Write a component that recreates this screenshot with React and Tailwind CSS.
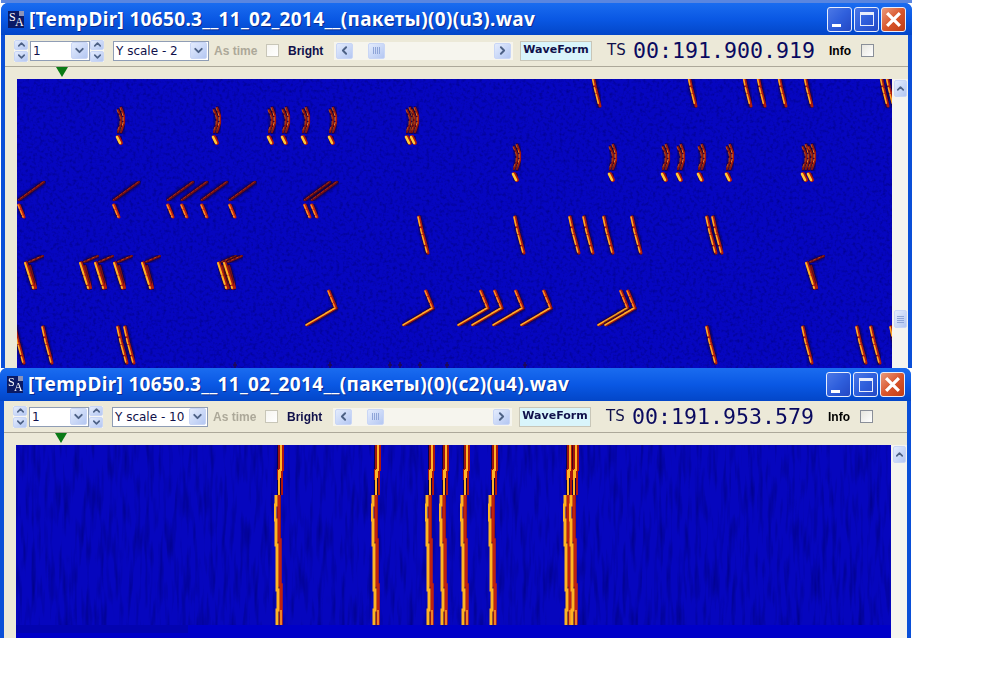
import { ChevronDown, ChevronLeft, ChevronRight, ChevronUp } from 'lucide-react';

const XpArrow = ({ icon: Icon, size = 11 }) => <Icon size={size} strokeWidth={3.5} className="text-[#4d6185]" />;

const xpButton = 'flex items-center justify-center rounded-[2px] border border-[#c9d6f6] bg-gradient-to-br from-[#e4ecfd] to-[#b4c7f2]';

const Spinner = () => (
  <div className="flex h-[22px] w-[14px] shrink-0 flex-col gap-[1px] bg-[#f6f6f2]">
    <div className={`${xpButton} h-[10.5px]`}><XpArrow icon={ChevronUp} /></div>
    <div className={`${xpButton} h-[10.5px]`}><XpArrow icon={ChevronDown} /></div>
  </div>
);

const Combo = ({ value, className }) => (
  <div className={`flex h-[20px] shrink-0 items-center justify-between border border-[#8f9db5] bg-white pl-[2px] pr-[1px] font-['DejaVu_Sans',sans-serif] text-[12px] font-normal leading-none text-[#10104a] ${className}`}>
    <span className="whitespace-nowrap">{value}</span>
    <div className={`${xpButton} h-[17px] w-[17px]`}><XpArrow icon={ChevronDown} size={13} /></div>
  </div>
);

const CheckBox = ({ className }) => (
  <div className={`h-[13px] w-[13px] shrink-0 border border-[#8a8f98] bg-gradient-to-br from-[#e6e5de] to-white ${className}`} />
);

const CaptionButton = ({ children, close }) => (
  <div className={`flex h-[25px] w-[25px] items-center justify-center rounded-[3px] border border-[#e8eefc] ${close ? 'bg-gradient-to-br from-[#e99a7c] via-[#d9562c] to-[#c03c12]' : 'bg-gradient-to-br from-[#4c78e6] via-[#2f5fdc] to-[#2448c4]'}`}>
    {children}
  </div>
);

const Logo = () => (
  <div className="relative h-[17px] w-[16px] shrink-0 overflow-hidden bg-[#0a1a66] font-['Liberation_Serif',serif] text-[12px] leading-none text-white">
    <span className="absolute left-[1px] top-[0px]">S</span>
    <span className="absolute left-[7px] top-[5px]">A</span>
    <span className="absolute right-0 top-0 h-[5px] w-[5px] bg-[#8d94b8]" />
  </div>
);

const noise = (id, fx, fy, seed, strength) => (
  <filter id={id} x="0" y="0" width="100%" height="100%">
    <feTurbulence type="fractalNoise" baseFrequency={`${fx} ${fy}`} numOctaves="2" seed={seed} />
    <feColorMatrix type="matrix" values={`0 0 0 0 0  0 0 0 0 0  0 0 0 0 0.2  ${strength} 0 0 0 ${-strength * 0.45}`} />
  </filter>
);

const SoftDefs = () => (
  <>
    <filter id="soft" x="-5%" y="-5%" width="110%" height="110%"><feGaussianBlur stdDeviation="0.45" /></filter>
    <filter id="halo" x="-5%" y="-5%" width="110%" height="110%"><feGaussianBlur stdDeviation="1.2" /></filter>
  </>
);

// one burst of the spectrogram: dark halo, red body, hot core
const Stroke = ({ d, core = '#ffb020', body = '#b01a10', w = 2, dash }) => (
  <g fill="none" strokeLinecap="round" strokeLinejoin="round">
    <path d={d} stroke="#14001c" strokeWidth={w + 3.5} opacity="0.75" transform="translate(1 0)" filter="url(#halo)" />
    <path d={d} stroke={body} strokeWidth={w + 1} transform="translate(1 0)" />
    <path d={d} stroke={core} strokeWidth={w - 0.4} strokeDasharray={dash} />
  </g>
);

const Zig = ({ x, y = 108 }) => (
  <g transform={`translate(${x} ${y})`}>
    <Stroke d="M0 0 L3 8 L3 15 L0 24" core="#ffa030" body="#a01810" w={1.2} dash="3 2" />
    <Stroke d="M-3 2 L0 9 L0 16 L-3 24" core="#f07a24" body="#8a1410" w={1} dash="3 3" />
    <Stroke d="M-3 29 L0 35" core="#ffc838" w={3} />
  </g>
);

const Hook = ({ x }) => (
  <g transform={`translate(${x} 180)`}>
    <Stroke d="M25 2 L0 20" core="#b82c18" body="#6a0e14" w={1.2} dash="3 2" />
    <Stroke d="M0 25 L5 37" core="#ff8a24" body="#c02010" w={2} dash="4 2" />
  </g>
);

const Flag = ({ x, y = 256 }) => (
  <g transform={`translate(${x} ${y})`}>
    <Stroke d="M3 6 L17 0" core="#e85a1c" body="#701014" w={1} dash="2 3" />
    <Stroke d="M4 10 L10 32" core="#f07020" w={1.2} />
    <Stroke d="M0 7 L8 32" core="#ffb428" w={2.4} dash="12 2 8 3" />
  </g>
);

const Slash = ({ x, y = 327, h = 36, dx = 9 }) => (
  <g transform={`translate(${x} ${y})`}>
    <Stroke d={`M0 0 L${dx * 0.35} ${h * 0.4} L${dx} ${h}`} core="#ffa828" w={2} dash="9 3 5 2" />
  </g>
);

const Long = ({ x }) => (
  <g transform={`translate(${x} 291)`}>
    <Stroke d="M0 0 L7 17" core="#ff8a24" w={2} dash="5 2" />
    <Stroke d="M7 17 L-22 34" core="#ffb02c" body="#a01810" w={2} dash="3 1" />
  </g>
);

const TopSpectrum = () => (
  <svg viewBox="17 79 875 289" width="875" height="289" className="block">
    <defs>
      {noise('topNoise', 0.3, 0.3, 3, 1.4)}
      <SoftDefs />
    </defs>
    <rect x="17" y="79" width="875" height="289" fill="#0606c0" />
    <rect x="17" y="79" width="875" height="289" filter="url(#topNoise)" />
    <g filter="url(#soft)">
      {[592, 688, 743, 757, 778, 804, 880, 886].map((x) => <Slash key={x} x={x} y={76} h={30} dx={7} />)}
      {[120, 216, 271, 285, 305, 332, 409, 414].map((x) => <Zig key={x} x={x} />)}
      {[516, 612, 665, 680, 701, 729, 805, 811].map((x) => <Zig key={x} x={x} y={145} />)}
      {[18, 113, 167, 181, 201, 229, 304, 311].map((x) => <Hook key={x} x={x} />)}
      {[418, 514, 569, 583, 603, 631, 706, 712].map((x) => <Slash key={x} x={x} y={217} />)}
      {[25, 80, 95, 114, 142, 218, 224, 806].map((x) => <Flag key={x} x={x} />)}
      {[328, 425, 480, 494, 515, 543, 620, 627].map((x) => <Long key={x} x={x} />)}
      {[14, 42, 117, 124, 706, 802, 856, 870, 890].map((x) => <Slash key={x} x={x} />)}
    </g>
    {[235, 330, 390, 400, 420, 447, 525].map((x) => (
      <path key={x} d={`M${x} 362 V368 M${x - 2} 365 H${x + 2}`} stroke="#200a50" strokeWidth="1.5" />
    ))}
  </svg>
);

const lines = [276, 373, 427, 441, 462, 490, 565, 571];

const BottomSpectrum = () => (
  <svg viewBox="16 445 875 193" width="875" height="193" className="block">
    <defs>
      {noise('bottomNoise', 0.22, 0.025, 8, 1.6)}
      <SoftDefs />
    </defs>
    <rect x="16" y="445" width="875" height="193" fill="#0606be" />
    <rect x="16" y="445" width="875" height="180" filter="url(#bottomNoise)" />
    <rect x="16" y="625" width="875" height="13" fill="#0000c8" />
    <rect x="16" y="625" width="172" height="8" fill="#0505a0" opacity="0.6" />
    {lines.map((x) => (
      <g key={x} fill="none" filter="url(#soft)">
        <path d={`M${x + 4} 445 V495 M${x + 2} 495 V625`} stroke="#12001a" strokeWidth="9" opacity="0.75" filter="url(#halo)" />
        <path d={`M${x + 7} 445 V470 h-1 V495`} stroke="#b01810" strokeWidth="2" />
        <path d={`M${x + 3} 445 V470 h-1 V480`} stroke="#a01810" strokeWidth="2" />
        <path d={`M${x + 3} 495 V540 h1 V585 h1 V625`} stroke="#c02010" strokeWidth="3.5" />
        <path d={`M${x + 5} 445 V470 h-1 V478 M${x + 3} 470 V495`} stroke="#ffb428" strokeWidth="2" />
        <path d={`M${x} 495 V505 h-1 V520 h1 V545 h1 V590 h1 V610 h-1 V625`} stroke="#ffb420" strokeWidth="3" />
        <path d={`M${x + 5} 610 V625`} stroke="#f08020" strokeWidth="2" />
      </g>
    ))}
  </svg>
);

const AppWindow = ({ title, scale, ts, titleHeight, bodyHeight, className, children, thumb }) => (
  <div className={`flex w-[911px] flex-col overflow-hidden rounded-t-[7px] bg-[#0a4fd8] ${className}`}>
    <div
      className="flex shrink-0 items-center justify-between bg-gradient-to-b from-[#1a6cf0] via-[#0a58e4] to-[#0346c8] pl-[7px] pr-[6px]"
      style={{ height: titleHeight }}
    >
      <div className="flex items-center gap-[5px]">
        <Logo />
        <span className="whitespace-nowrap font-['Noto_Sans',sans-serif] text-[19px] font-bold leading-none tracking-[0.33px] text-white [text-shadow:1px_1px_0_#0a2a90]">{title}</span>
      </div>
      <div className="flex gap-[2px]">
        <CaptionButton>
          <span className="mt-[13px] mr-[6px] h-[3px] w-[9px] bg-white" />
        </CaptionButton>
        <CaptionButton>
          <span className="h-[14px] w-[14px] border border-t-[3px] border-[#e8eefc]" />
        </CaptionButton>
        <CaptionButton close>
          <svg viewBox="0 0 16 16" width="17" height="17"><path d="M2 2 L14 14 M14 2 L2 14" stroke="#fff" strokeWidth="3" /></svg>
        </CaptionButton>
      </div>
    </div>

    <div className="mx-[4px] flex h-[32px] shrink-0 items-center border-b border-[#aca899] bg-[#ece9d8] pl-[9px] font-['Liberation_Sans',sans-serif] text-[12px] font-bold">
      <Spinner />
      <Combo value="1" className="ml-[2px] w-[60px]" />
      <Spinner />
      <Combo value={scale} className="ml-[9px] w-[96px]" />
      <span className="ml-[5px] w-[52px] whitespace-nowrap text-[#aca899]">As time</span>
      <CheckBox className="border-[#c8c6b8] from-[#f6f5f0] to-white" />
      <span className="ml-[9px] w-[46px] text-[#10104a]">Bright</span>
      <div className="flex h-[18px] w-[179px] shrink-0 items-center justify-between bg-[#f6f5ee] px-[2px]">
        <div className="flex items-center gap-[15px]">
          <div className={`${xpButton} h-[16px] w-[17px]`}><XpArrow icon={ChevronLeft} size={13} /></div>
          <div className={`${xpButton} h-[16px] w-[17px] gap-[1px]`}>
            <span className="h-[7px] w-px bg-[#8fa5d8]" />
            <span className="h-[7px] w-px bg-[#8fa5d8]" />
            <span className="h-[7px] w-px bg-[#8fa5d8]" />
            <span className="h-[7px] w-px bg-[#8fa5d8]" />
          </div>
        </div>
        <div className={`${xpButton} h-[16px] w-[17px]`}><XpArrow icon={ChevronRight} size={13} /></div>
      </div>
      <div className="ml-[7px] flex h-[20px] w-[72px] shrink-0 items-center justify-center border border-[#c8c6b8] bg-[#d9f5fb] font-['DejaVu_Sans',sans-serif] text-[11px] text-[#10104a]">WaveForm</div>
      <span className="ml-[15px] w-[26px] font-['DejaVu_Sans',sans-serif] text-[15px] font-normal text-[#10104a]">TS</span>
      <span className="w-[196px] font-['DejaVu_Sans_Mono',monospace] text-[21.6px] font-normal leading-none text-[#0a0a60]">{ts}</span>
      <span className="w-[32px] text-black">Info</span>
      <CheckBox />
    </div>

    <div className="relative mx-[4px] h-[12px] shrink-0 bg-[#ece9d8]">
      <svg viewBox="0 0 12 10" width="12" height="10" className="absolute left-[51px] top-0">
        <path d="M0 0 H12 L6 10 Z" fill="#0a7a16" />
      </svg>
    </div>

    <div className="mx-[4px] flex shrink-0 overflow-hidden bg-[#ece9d8]" style={{ height: bodyHeight }}>
      <div className="w-[12px] shrink-0" />
      {children}
      <div className="relative w-[16px] shrink-0 bg-[#f5f4ef] pl-[2px] pt-[1px]">
        <div className={`${xpButton} h-[17px] w-[13px]`}><XpArrow icon={ChevronUp} /></div>
        {thumb && (
          <div className={`${xpButton} absolute left-[2px] top-[231px] h-[18px] w-[13px] flex-col gap-[1px]`}>
            <span className="h-px w-[7px] bg-[#8fa5d8]" />
            <span className="h-px w-[7px] bg-[#8fa5d8]" />
            <span className="h-px w-[7px] bg-[#8fa5d8]" />
            <span className="h-px w-[7px] bg-[#8fa5d8]" />
          </div>
        )}
      </div>
    </div>
  </div>
);

export default function App() {
  return (
    <div className="min-h-[674px] w-full bg-white">
      <div className="ml-[1px] h-[3px] w-[911px] bg-[#5a86e0]" />
      <AppWindow
        className="ml-[1px] h-[365px]"
        title="[TempDir] 10650.3__11_02_2014__(пакеты)(0)(u3).wav"
        scale="Y scale - 2"
        ts="00:191.900.919"
        titleHeight={32}
        bodyHeight={289}
        thumb
      >
        <TopSpectrum />
      </AppWindow>
      <AppWindow
        className="h-[270px]"
        title="[TempDir] 10650.3__11_02_2014__(пакеты)(0)(c2)(u4).wav"
        scale="Y scale - 10"
        ts="00:191.953.579"
        titleHeight={33}
        bodyHeight={193}
      >
        <BottomSpectrum />
      </AppWindow>
    </div>
  );
}
